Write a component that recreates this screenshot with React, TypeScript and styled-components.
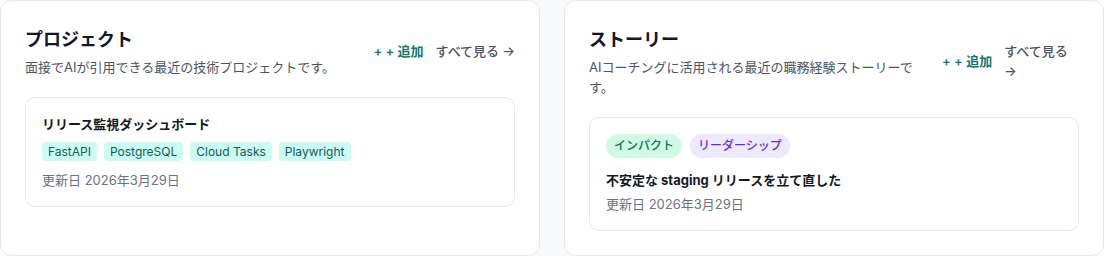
import styled, { createGlobalStyle } from "styled-components";

const GlobalStyle = createGlobalStyle`
  body {
    margin: 0;
    background-color: #f8f9fa;
    font-family: "Inter", "Noto Sans CJK JP", sans-serif;
    color: #111827;
  }
`;

const Page = styled.div`
  display: grid;
  grid-template-columns: 1fr 1fr;
  gap: 24px;
  width: 1104px;
  height: 256px;
  overflow: hidden;
`;

const Panel = styled.section`
  background-color: #ffffff;
  border: 1px solid #e6e8eb;
  border-radius: 12px;
  padding: 24px;
  height: 256px;
  box-sizing: border-box;
`;

const PanelHeader = styled.div`
  display: flex;
  align-items: center;
  gap: 16px;
  margin-bottom: 20px;
`;

const HeaderText = styled.div`
  display: flex;
  flex-direction: column;
  gap: 2px;
`;

const Title = styled.h2`
  margin: 0;
  font-size: 18px;
  line-height: 30px;
  font-weight: 700;
  color: #111827;
`;

const Subtitle = styled.p`
  margin: 0;
  font-size: 13px;
  line-height: 20px;
  color: #4b5563;
`;

const Actions = styled.div`
  display: flex;
  align-items: center;
  gap: 12px;
  margin-left: auto;
`;

const AddButton = styled.button`
  flex-shrink: 0;
  white-space: nowrap;
  border: none;
  background: none;
  padding: 0;
  font-family: inherit;
  font-size: 13px;
  line-height: 20px;
  font-weight: 600;
  color: #0f766e;
  cursor: pointer;
`;

const ViewAll = styled.a`
  font-size: 13px;
  line-height: 20px;
  font-weight: 500;
  color: #4b5563;
  text-decoration: none;
`;

const Item = styled.div`
  border: 1px solid #e6e8eb;
  border-radius: 10px;
  padding: 16px;
  display: flex;
  flex-direction: column;
`;

const ItemTitle = styled.div<{ $gap: number }>`
  font-size: 13px;
  line-height: 20px;
  font-weight: 700;
  color: #111827;
  margin-bottom: ${(p) => p.$gap}px;
`;

const TagRow = styled.div<{ $gap: number; $space: number }>`
  display: flex;
  flex-wrap: wrap;
  gap: ${(p) => p.$gap}px;
  margin-bottom: ${(p) => p.$space}px;
`;

const TechTag = styled.span`
  background-color: #ccfbf1;
  color: #115e59;
  font-size: 12px;
  line-height: 15px;
  padding: 2px 6px;
  border-radius: 4px;
`;

const Pill = styled.span<{ $tone: "green" | "purple" }>`
  background-color: ${(p) => (p.$tone === "green" ? "#d1fae5" : "#ede9fe")};
  color: ${(p) => (p.$tone === "green" ? "#047857" : "#6d28d9")};
  font-size: 12px;
  line-height: 16px;
  font-weight: 500;
  padding: 4px 8px;
  border-radius: 999px;
`;

const Updated = styled.div`
  font-size: 13px;
  line-height: 20px;
  color: #6b7280;
`;

const App = () => {
  return (
    <>
      <GlobalStyle />
      <Page>
        <Panel>
          <PanelHeader>
            <HeaderText>
              <Title>プロジェクト</Title>
              <Subtitle>面接でAIが引用できる最近の技術プロジェクトです。</Subtitle>
            </HeaderText>
            <Actions>
              <AddButton>+ + 追加</AddButton>
              <ViewAll href="#">すべて見る →</ViewAll>
            </Actions>
          </PanelHeader>
          <Item>
            <ItemTitle $gap={8}>リリース監視ダッシュボード</ItemTitle>
            <TagRow $gap={7} $space={9}>
              {["FastAPI", "PostgreSQL", "Cloud Tasks", "Playwright"].map((t) => (
                <TechTag key={t}>{t}</TechTag>
              ))}
            </TagRow>
            <Updated>更新日 2026年3月29日</Updated>
          </Item>
        </Panel>
        <Panel>
          <PanelHeader>
            <HeaderText>
              <Title>ストーリー</Title>
              <Subtitle>AIコーチングに活用される最近の職務経験ストーリーです。</Subtitle>
            </HeaderText>
            <Actions>
              <AddButton>+ + 追加</AddButton>
              <ViewAll href="#">すべて見る →</ViewAll>
            </Actions>
          </PanelHeader>
          <Item>
            <TagRow $gap={8} $space={12}>
              <Pill $tone="green">インパクト</Pill>
              <Pill $tone="purple">リーダーシップ</Pill>
            </TagRow>
            <ItemTitle $gap={4}>不安定な staging リリースを立て直した</ItemTitle>
            <Updated>更新日 2026年3月29日</Updated>
          </Item>
        </Panel>
      </Page>
    </>
  );
};

export default App;
